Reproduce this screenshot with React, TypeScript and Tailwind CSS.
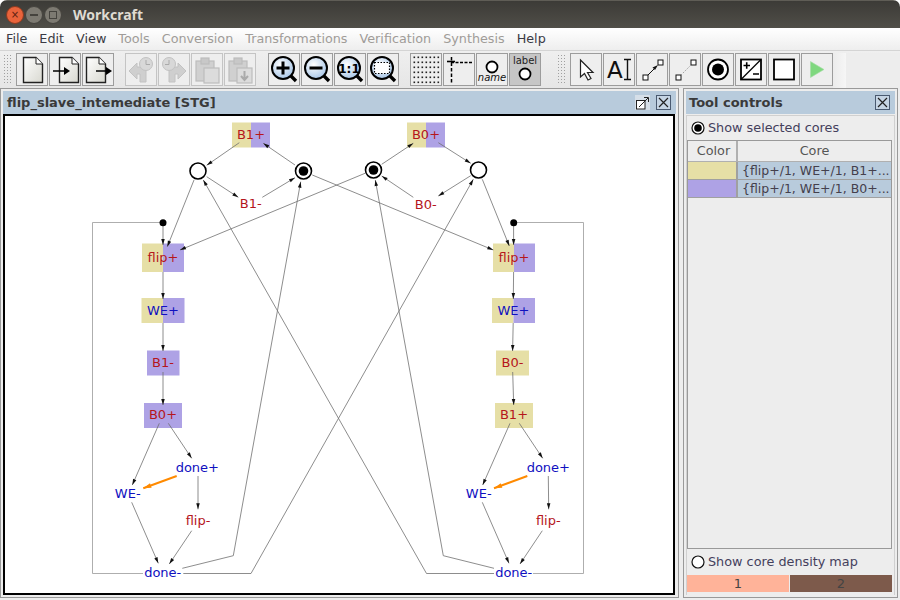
import React from 'react';

const YELLOW = '#e6dfa6';
const PURPLE = '#aea2e5';
const RED = '#b5161c';
const BLUE = '#1010c0';
const EDGE = '#707070';

type Pt = [number, number];

function Edge({ pts, color = EDGE, width = 0.8, arrow = 6 }: { pts: Pt[]; color?: string; width?: number; arrow?: number }) {
  const [ax, ay] = pts[pts.length - 2];
  const [bx, by] = pts[pts.length - 1];
  const len = Math.hypot(bx - ax, by - ay);
  const ux = (bx - ax) / len;
  const uy = (by - ay) / len;
  const hw = arrow / 3.4;
  const base: Pt = [bx - ux * arrow, by - uy * arrow];
  const head = `${bx},${by} ${base[0] - uy * hw},${base[1] + ux * hw} ${base[0] + uy * hw},${base[1] - ux * hw}`;
  return (
    <g>
      <polyline points={pts.map((p) => p.join(',')).join(' ')} fill="none" stroke={color} strokeWidth={width} />
      <polygon points={head} fill={color === EDGE ? '#111' : color} />
    </g>
  );
}

function Plain({ pts }: { pts: Pt[] }) {
  return <polyline points={pts.map((p) => p.join(',')).join(' ')} fill="none" stroke="#999" strokeWidth={0.8} />;
}

function Box({ x, y, w, h, split, left, right }: { x: number; y: number; w: number; h: number; split: number; left: string; right: string }) {
  return (
    <g>
      <rect x={x} y={y} width={split - x} height={h} fill={left} />
      <rect x={split} y={y} width={x + w - split} height={h} fill={right} />
    </g>
  );
}

function Label({ x, y, color, children }: { x: number; y: number; color: string; children: string }) {
  return (
    <text x={x} y={y + 4.5} textAnchor="middle" fill={color} className="text-[13px]">
      {children}
    </text>
  );
}

function Place({ x, y, marked }: { x: number; y: number; marked?: boolean }) {
  return (
    <g>
      <circle cx={x} cy={y} r={8} fill="#fff" stroke="#000" strokeWidth={1.6} />
      {marked && <circle cx={x} cy={y} r={4.8} fill="#000" />}
    </g>
  );
}

function Graph() {
  return (
    <svg viewBox="5 116 668 477" className="w-[668px] h-[477px] block">
      <Box x={232} y={122.5} w={38} h={25} split={251} left={YELLOW} right={PURPLE} />
      <Box x={407} y={122.5} w={38} h={25} split={426} left={YELLOW} right={PURPLE} />
      <Box x={142} y={243.5} w={42} h={28.5} split={163} left={YELLOW} right={PURPLE} />
      <Box x={141.5} y={298} w={43} h={25} split={163} left={YELLOW} right={PURPLE} />
      <Box x={147} y={350.5} w={32.5} h={25} split={163} left={PURPLE} right={PURPLE} />
      <Box x={144} y={403} w={38} h={25} split={163} left={PURPLE} right={PURPLE} />
      <Box x={493} y={243.5} w={42} h={28.5} split={514} left={YELLOW} right={PURPLE} />
      <Box x={492} y={298} w={43} h={25} split={513.5} left={YELLOW} right={PURPLE} />
      <Box x={496} y={350.5} w={33} h={25} split={512} left={YELLOW} right={YELLOW} />
      <Box x={495} y={403} w={38} h={25} split={514} left={YELLOW} right={YELLOW} />

      <Edge pts={[[239.3, 142.7], [206.7, 165.3]]} />
      <Edge pts={[[295, 165], [263.3, 143.3]]} />
      <Edge pts={[[206.7, 176.7], [238.3, 197.3]]} />
      <Edge pts={[[262.3, 197.3], [295, 177.7]]} />
      <Edge pts={[[194, 180], [167.3, 246.7]]} />
      <Edge pts={[[312.3, 175], [493.3, 250]]} />
      <Edge pts={[[365, 173.3], [180, 250]]} />
      <Edge pts={[[163, 226], [163, 245]]} />
      <Edge pts={[[163, 272], [163, 299]]} />
      <Edge pts={[[163, 323], [163, 351]]} />
      <Edge pts={[[163, 372], [163, 405]]} />
      <Edge pts={[[159.3, 423.3], [132.3, 485]]} />
      <Edge pts={[[168.3, 423.3], [191.7, 458.3]]} />
      <Edge pts={[[176.7, 476], [143.3, 488.3]]} color="#ff8a00" width={2} arrow={8} />
      <Edge pts={[[198, 476], [198, 509.3]]} />
      <Edge pts={[[131.7, 502.3], [158.3, 563.3]]} />
      <Edge pts={[[191.7, 530.7], [169.3, 564]]} />
      <Plain pts={[[143, 573.5], [92.5, 573.5], [92.5, 222.5], [160, 222.5]]} />
      <Edge pts={[[182.3, 568.3], [233.3, 555.7], [300.7, 181.7]]} />
      <Edge pts={[[183.3, 573.5], [251, 573.5], [473.3, 179.3]]} />

      <Edge pts={[[494, 573.5], [426.5, 573.5], [203.3, 180]]} />
      <Edge pts={[[494, 568.3], [443.3, 555.7], [375.3, 180]]} />
      <Plain pts={[[533, 573.5], [583.5, 573.5], [583.5, 222.5], [517, 222.5]]} />
      <Edge pts={[[381.7, 164.3], [413.3, 143.3]]} />
      <Edge pts={[[438.3, 142.7], [470.7, 163.3]]} />
      <Edge pts={[[470.7, 175.7], [438.3, 196]]} />
      <Edge pts={[[413.3, 197.3], [381.7, 176]]} />
      <Edge pts={[[482.3, 179.3], [509.3, 246]]} />
      <Edge pts={[[513.6, 226], [513.6, 245]]} />
      <Edge pts={[[513.6, 272], [513.3, 299]]} />
      <Edge pts={[[513.2, 323], [512.6, 351]]} />
      <Edge pts={[[512.7, 372], [513.7, 405]]} />
      <Edge pts={[[510, 423.3], [482.7, 485]]} />
      <Edge pts={[[519.3, 423.3], [542.7, 458.3]]} />
      <Edge pts={[[527.3, 476], [494, 488.3]]} color="#ff8a00" width={2} arrow={8} />
      <Edge pts={[[548.3, 476], [548.7, 509.3]]} />
      <Edge pts={[[482.3, 502.3], [509, 563.3]]} />
      <Edge pts={[[542.3, 530.7], [520, 564]]} />

      <Place x={198} y={171} />
      <Place x={303.5} y={171} marked />
      <Place x={373.5} y={170} marked />
      <Place x={478.5} y={170} />
      <circle cx={163} cy={222.7} r={3.5} fill="#000" />
      <circle cx={513.7} cy={222.7} r={3.5} fill="#000" />

      <Label x={251} y={134} color={RED}>B1+</Label>
      <Label x={426} y={134} color={RED}>B0+</Label>
      <Label x={250.7} y={203.5} color={RED}>B1-</Label>
      <Label x={425.7} y={204} color={RED}>B0-</Label>
      <Label x={163} y={257} color={RED}>flip+</Label>
      <Label x={163} y={310} color={BLUE}>WE+</Label>
      <Label x={163} y={362} color={RED}>B1-</Label>
      <Label x={163} y={414.5} color={RED}>B0+</Label>
      <Label x={197.3} y={467.5} color={BLUE}>done+</Label>
      <Label x={127.7} y={493.3} color={BLUE}>WE-</Label>
      <Label x={198} y={520.5} color={RED}>flip-</Label>
      <Label x={162.7} y={572.3} color={BLUE}>done-</Label>
      <Label x={514} y={257} color={RED}>flip+</Label>
      <Label x={513.5} y={310} color={BLUE}>WE+</Label>
      <Label x={512.5} y={362} color={RED}>B0-</Label>
      <Label x={514} y={414.5} color={RED}>B1+</Label>
      <Label x={548.3} y={467.5} color={BLUE}>done+</Label>
      <Label x={478.7} y={493.3} color={BLUE}>WE-</Label>
      <Label x={548.3} y={520.5} color={RED}>flip-</Label>
      <Label x={513.7} y={572.3} color={BLUE}>done-</Label>
    </svg>
  );
}

function ToolButton({ children, disabled, active }: { children: React.ReactNode; disabled?: boolean; active?: boolean }) {
  return (
    <div
      className={`w-[32px] h-[33px] border ${disabled ? 'border-[#c4c4c4]' : 'border-[#9c9c9c]'} ${active ? 'bg-[#c6c6c6]' : 'bg-[#eeeeee]'}`}
    >
      <svg viewBox="0 0 30 31" className="w-[30px] h-[31px] block">
        {children}
      </svg>
    </div>
  );
}

function Page({ x = 0 }: { x?: number }) {
  const id = `page${x}`;
  return (
    <g transform={`translate(${x} 0)`}>
      <defs>
        <linearGradient id={id} x1="0" y1="0" x2="1" y2="1">
          <stop offset="0" stopColor="#ffffff" />
          <stop offset="1" stopColor="#d8d8d0" />
        </linearGradient>
      </defs>
      <path d="M6.5 3.5H19L25.5 10V28.5H6.5Z" fill={`url(#${id})`} stroke="#222" strokeWidth={1.4} />
      <path d="M19 3.5V10H25.5" fill="#fff" stroke="#222" strokeWidth={1} />
    </g>
  );
}

function Lens({ id, children }: { id: string; children?: React.ReactNode }) {
  return (
    <g>
      <defs>
        <radialGradient id={id} cx="0.4" cy="0.35" r="0.75">
          <stop offset="0" stopColor="#ffffff" />
          <stop offset="1" stopColor="#9dbfe4" />
        </radialGradient>
      </defs>
      <path d="M21 21L27 27" stroke="#000" strokeWidth={3.4} />
      <circle cx="14" cy="14" r="11" fill={`url(#${id})`} stroke="#000" strokeWidth={2} />
      {children}
    </g>
  );
}

function UndoIcon({ flip }: { flip?: boolean }) {
  return (
    <g transform={flip ? 'translate(30 0) scale(-1 1)' : undefined} fill="#cfcfcf" stroke="#c2c2c2" strokeWidth={1}>
      <path d="M3 17L11 9V13H20V28H14V20H11V25Z" />
      <circle cx="20" cy="10" r="6.5" fill="#d8d8d8" />
      <path d="M20 6V10.5H24" fill="none" stroke="#aaa" />
    </g>
  );
}

function ClipIcon({ down }: { down?: boolean }) {
  return (
    <g fill="#d0d0d0" stroke="#bdbdbd" strokeWidth={1.2}>
      <rect x="4" y="7" width="18" height="20" />
      <rect x="9" y="4" width="8" height="6" fill="#c8c8c8" />
      <rect x="12" y="14" width="15" height="15" fill="#dcdcdc" />
      {down && <path d="M19.5 17V25M16 22L19.5 26L23 22" fill="none" stroke="#aaa" strokeWidth={2} />}
    </g>
  );
}

function GridIcon() {
  const dots: React.ReactNode[] = [];
  for (let r = 0; r < 6; r++) {
    for (let c = 0; c < 7; c++) {
      dots.push(<rect key={`${r}-${c}`} x={2.5 + c * 4} y={2.5 + r * 5} width={1.6} height={1.6} fill="#222" />);
    }
  }
  return <g>{dots}</g>;
}

function Toolbar() {
  return (
    <div className="h-[38px] flex items-start pt-[1.5px] pl-[3px] bg-gradient-to-b from-[#efefef] to-[#e6e6e6] border-t border-[#d4d4d4]">
      <div className="w-[10px] h-[31px] mt-[1px] bg-[radial-gradient(#a0a0a0_0.8px,transparent_0.9px)] bg-[length:3px_3px]" />
      <div className="ml-[3px] flex gap-px">
        <ToolButton><Page /></ToolButton>
        <ToolButton>
          <Page x={3} />
          <path d="M3 17H16" stroke="#000" strokeWidth={1.6} />
          <path d="M14 13L20 17L14 21Z" fill="#000" />
        </ToolButton>
        <ToolButton>
          <Page x={-3} />
          <path d="M13 17H25" stroke="#000" strokeWidth={1.6} />
          <path d="M23 13L29 17L23 21Z" fill="#000" />
        </ToolButton>
      </div>
      <div className="ml-[11px] flex gap-px">
        <ToolButton disabled><UndoIcon /></ToolButton>
        <ToolButton disabled><UndoIcon flip /></ToolButton>
        <ToolButton disabled><ClipIcon /></ToolButton>
        <ToolButton disabled><ClipIcon down /></ToolButton>
      </div>
      <div className="ml-[12px] flex gap-px">
        <ToolButton>
          <Lens id="zoomIn"><path d="M7.5 14H20.5M14 7.5V20.5" stroke="#000" strokeWidth={3} /></Lens>
        </ToolButton>
        <ToolButton>
          <Lens id="zoomOut"><path d="M7.5 14H20.5" stroke="#000" strokeWidth={3} /></Lens>
        </ToolButton>
        <ToolButton>
          <Lens id="zoomOne">
            <text x="14" y="18.5" textAnchor="middle" fill="#000" className="text-[12px] font-bold">1:1</text>
          </Lens>
        </ToolButton>
        <ToolButton>
          <Lens id="zoomFit">
            <rect x="6.5" y="8.5" width="15" height="11" fill="#fff" stroke="#000" strokeWidth={1.2} strokeDasharray="1.5 1.5" />
          </Lens>
        </ToolButton>
      </div>
      <div className="ml-[11px] flex gap-px">
        <ToolButton><GridIcon /></ToolButton>
        <ToolButton>
          <path d="M7 8.5H29" stroke="#000" strokeWidth={1.5} strokeDasharray="3 1.5" />
          <path d="M7.5 3V30" stroke="#000" strokeWidth={1.5} strokeDasharray="3.5 2" />
          <path d="M3 7.5H11" stroke="#000" strokeWidth={1.6} />
        </ToolButton>
        <ToolButton>
          <circle cx="15" cy="13" r="5.5" fill="#fff" stroke="#000" strokeWidth={1.8} />
          <text x="15" y="27" textAnchor="middle" fill="#111" className="text-[10px] italic">name</text>
        </ToolButton>
        <ToolButton active>
          <text x="15" y="10" textAnchor="middle" fill="#222" className="text-[10px]">label</text>
          <circle cx="15" cy="20" r="5.5" fill="#fff" stroke="#000" strokeWidth={1.8} />
        </ToolButton>
      </div>
      <div className="ml-[16px] w-[9px] h-[31px] mt-[1px] bg-[radial-gradient(#a0a0a0_0.8px,transparent_0.9px)] bg-[length:3px_3px]" />
      <div className="ml-[4px] flex gap-px">
        <ToolButton>
          <path d="M9.5 6V23L13.5 19.5L17 26L20 24.5L16.5 18.5H22Z" fill="#fff" stroke="#222" strokeWidth={1.2} />
        </ToolButton>
        <ToolButton>
          <text x="3" y="24" fill="#111" className="text-[23px]">A</text>
          <path d="M20 5.5H27M20 25.5H27M23.5 5.5V25.5" stroke="#111" strokeWidth={1.4} fill="none" />
        </ToolButton>
        <ToolButton>
          <rect x="6" y="21" width="5" height="5" fill="#fff" stroke="#111" />
          <rect x="21" y="6" width="5" height="5" fill="#fff" stroke="#111" />
          <path d="M11 21L17 15" stroke="#111" strokeWidth={1} />
          <path d="M21 11L15.5 13.5L18 16Z" fill="#111" />
        </ToolButton>
        <ToolButton>
          <rect x="6" y="21" width="5" height="5" fill="#fff" stroke="#111" />
          <rect x="21" y="6" width="5" height="5" fill="#fff" stroke="#111" />
          <path d="M11 21L21 11" stroke="#999" strokeWidth={1} strokeDasharray="1.5 1.5" />
        </ToolButton>
        <ToolButton>
          <circle cx="15" cy="15.5" r="10" fill="#fff" stroke="#000" strokeWidth={1.8} />
          <circle cx="15" cy="15.5" r="6" fill="#000" />
        </ToolButton>
        <ToolButton>
          <rect x="5" y="5.5" width="20" height="20" fill="#fff" stroke="#000" strokeWidth={1.8} />
          <path d="M5 25.5L25 5.5" stroke="#000" strokeWidth={1.2} />
          <path d="M7.5 11.5H14M10.7 8.2V14.8M17 20H23" stroke="#000" strokeWidth={1.6} />
        </ToolButton>
        <ToolButton>
          <rect x="5" y="5.5" width="20" height="20" fill="#fff" stroke="#000" strokeWidth={1.8} />
        </ToolButton>
        <ToolButton>
          <path d="M8.5 7.5L22 15.5L8.5 23.5Z" fill="#7fd87f" stroke="#a4dca4" strokeWidth={0.6} />
        </ToolButton>
      </div>
      <div className="w-[13px] self-stretch bg-gradient-to-r from-[#ececec] to-[#f6f6f6]" />
      <div className="flex-1 self-stretch bg-[#ededed]" />
    </div>
  );
}

function SmallButton({ close }: { close?: boolean }) {
  if (close) {
    return (
      <div className="w-[15px] h-[15px] border border-[#4a5a70] bg-[#c6d5e4] flex items-center justify-center">
        <svg viewBox="0 0 13 13" className="w-[13px] h-[13px] block">
          <path d="M2 2L11 11M11 2L2 11" stroke="#222" strokeWidth={1.2} />
        </svg>
      </div>
    );
  }
  return (
    <div className="w-[15px] h-[15px] bg-[#d6dfe8] flex items-center justify-center">
      <svg viewBox="0 0 15 15" className="w-[15px] h-[15px] block">
        <rect x="1.5" y="5.5" width="8.5" height="8.5" fill="#fff" stroke="#222" />
        <path d="M4 12L13 3M9 2.5H13.5V7" fill="none" stroke="#222" strokeWidth={1} />
      </svg>
    </div>
  );
}

function Radio({ on, rowClass, children }: { on?: boolean; rowClass: string; children: string }) {
  return (
    <div className={`${rowClass} flex items-center pl-[4px] gap-[3px] text-[12.8px] text-[#44405c]`}>
      <svg viewBox="0 0 14 14" className="w-[14px] h-[14px] block">
        <circle cx="7" cy="7" r="6" fill="#fff" stroke="#111" strokeWidth={1.2} />
        {on && <circle cx="7" cy="7" r="3.8" fill="#000" />}
      </svg>
      <span>{children}</span>
    </div>
  );
}

const cores = [
  { color: 'bg-[#e6dfa6]', text: '{flip+/1, WE+/1, B1+...' },
  { color: 'bg-[#aea2e5]', text: '{flip+/1, WE+/1, B0+...' },
];

function ToolControls() {
  return (
    <div className="w-[215px] ml-[4px] mb-[2px] border border-[#999] p-[2px] flex flex-col bg-[#ededed]">
      <div className="h-[23px] flex items-center justify-between bg-[#b8cbdc] pl-[3px] pr-[5px]">
        <span className="text-[13px] font-bold text-[#3a3a3a]">Tool controls</span>
        <SmallButton close />
      </div>
      <div className="flex-1 flex flex-col mt-px border border-[#d0d0d0] border-b-0 pr-[2px]">
        <Radio on rowClass="h-[24px]">Show selected cores</Radio>
        <div className="flex-1 border border-[#999] flex flex-col text-[12.5px] text-[#44404c]">
          <div className="flex h-[21px] border-b border-[#b0b0b0]">
            <div className="w-[50px] flex items-center justify-center pl-[3px] border-r-2 border-[#b0b0b0] text-[#555] text-[12.8px]">Color</div>
            <div className="flex-1 flex items-center justify-center text-[#555] text-[12.8px]">Core</div>
          </div>
          {cores.map((core) => (
            <div key={core.text} className="flex h-[18px] border-b border-[#a0a0a0]">
              <div className={`w-[50px] border-r-2 border-[#a0a0a0] ${core.color}`} />
              <div className="flex-1 bg-[#b8cbdc] pl-[4px] leading-[17px] whitespace-nowrap">{core.text}</div>
            </div>
          ))}
        </div>
        <Radio rowClass="h-[26px]">Show core density map</Radio>
        <div className="h-[17px] flex gap-px text-[13px] text-[#444]">
          <div className="flex-1 bg-[#ffb399] text-center leading-[17px]">1</div>
          <div className="flex-1 bg-[#7d5a4b] text-center leading-[17px]">2</div>
        </div>
        <div className="h-[3px]" />
      </div>
    </div>
  );
}

const menus = [
  { label: 'File', on: true },
  { label: 'Edit', on: true },
  { label: 'View', on: true },
  { label: 'Tools', on: false },
  { label: 'Conversion', on: false },
  { label: 'Transformations', on: false },
  { label: 'Verification', on: false },
  { label: 'Synthesis', on: false },
  { label: 'Help', on: true },
];

export default function App() {
  return (
    <div className="w-[900px] h-[600px] bg-white overflow-hidden font-['DejaVu_Sans',sans-serif]">
      <div className="w-full h-full flex flex-col rounded-t-[7px] overflow-hidden bg-[#ededed]">
        <div className="h-[28px] flex items-center pl-[6px] bg-gradient-to-b from-[#3c3b37] to-[#504e48] border-t border-[#5f5d56]">
          <div className="w-[18px] h-[18px] rounded-full bg-[#e9633b] border border-[#8a3a20] flex items-center justify-center text-[10px] leading-none text-[#5a2010]">
            ×
          </div>
          <div className="ml-px w-[18px] h-[18px] rounded-full bg-[#7d7a72] border border-[#45433e] flex items-center justify-center">
            <div className="w-[8px] h-[2px] bg-[#45433e]" />
          </div>
          <div className="ml-px w-[18px] h-[18px] rounded-full bg-[#7d7a72] border border-[#45433e] flex items-center justify-center">
            <div className="w-[8px] h-[8px] border border-[#45433e]" />
          </div>
          <span className="ml-[11px] text-[14px] font-bold text-[#dfdbd2] font-['Noto_Sans',sans-serif]">Workcraft</span>
        </div>
        <div className="h-[22px] flex items-center gap-[12px] pl-[6px] text-[12.75px] bg-gradient-to-b from-[#ffffff] to-[#eeeeee]">
          {menus.map((menu) => (
            <span key={menu.label} className={menu.on ? 'text-[#3a3a44]' : 'text-[#a09c98]'}>
              {menu.label}
            </span>
          ))}
        </div>
        <Toolbar />
        <div className="flex-1 flex min-h-0">
          <div className="w-[679px] mb-[2px] border border-[#999] px-[2px] pt-[2px] flex flex-col">
            <div className="h-[23px] flex items-center justify-between bg-[#b8cbdc] pl-[4px] pr-[5px]">
              <span className="text-[13px] font-bold text-[#3a3a3a]">flip_slave_intemediate [STG]</span>
              <div className="flex gap-[6px]">
                <SmallButton />
                <SmallButton close />
              </div>
            </div>
            <div className="w-[672px] h-[481px] border-2 border-black bg-white">
              <Graph />
            </div>
          </div>
          <ToolControls />
        </div>
      </div>
    </div>
  );
}
